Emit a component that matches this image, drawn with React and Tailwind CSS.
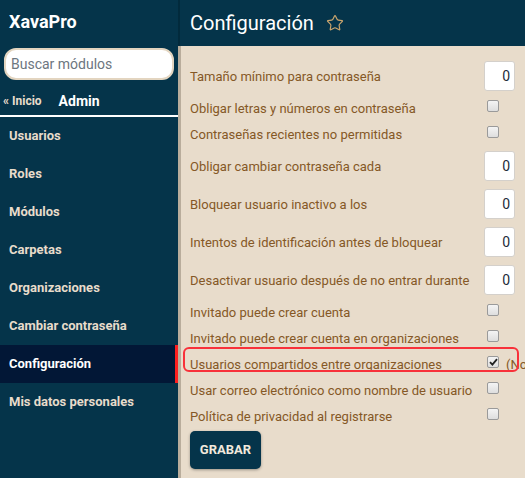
import { Star } from "lucide-react";

const MENU = [
  "Usuarios",
  "Roles",
  "Módulos",
  "Carpetas",
  "Organizaciones",
  "Cambiar contraseña",
  "Configuración",
  "Mis datos personales",
];

const FIELDS = [
  { label: "Tamaño mínimo para contraseña", type: "number" },
  { label: "Obligar letras y números en contraseña", type: "check" },
  { label: "Contraseñas recientes no permitidas", type: "check" },
  { label: "Obligar cambiar contraseña cada", type: "number" },
  { label: "Bloquear usuario inactivo a los", type: "number" },
  { label: "Intentos de identificación antes de bloquear", type: "number" },
  { label: "Desactivar usuario después de no entrar durante", type: "number" },
  { label: "Invitado puede crear cuenta", type: "check" },
  { label: "Invitado puede crear cuenta en organizaciones", type: "check" },
  { label: "Usuarios compartidos entre organizaciones", type: "check", checked: true, note: "(No disponible)", marked: true },
  { label: "Usar correo electrónico como nombre de usuario", type: "check" },
  { label: "Política de privacidad al registrarse", type: "check" },
];

function Checkbox({ checked }) {
  return (
    <div className="ml-[3px] mt-[5px] flex h-[12px] w-[12px] shrink-0 items-center justify-center rounded-[2px] border border-[#9a9a9a] bg-gradient-to-b from-[#f4f4f4] to-[#dedede]">
      {checked && (
        <svg width="9" height="8" viewBox="0 0 9 8">
          <path d="M1 4.2 L3.4 6.6 L8 1.2" fill="none" stroke="#222" strokeWidth="1.8" />
        </svg>
      )}
    </div>
  );
}

function FieldRow({ field }) {
  const isNumber = field.type === "number";
  return (
    <div className={`relative flex items-center ${isNumber ? "h-[38px]" : "h-[26px]"}`}>
      {field.marked && (
        <div className="pointer-events-none absolute left-[-7px] top-[-4px] h-[25px] w-[336px] rounded-[6px] border-2 border-[#f8313a]" />
      )}
      <div className="w-[294px] shrink-0 whitespace-nowrap pt-[2px] text-[13px] text-[#855826]">{field.label}</div>
      {isNumber ? (
        <div className="flex h-[30px] w-[31px] shrink-0 items-center justify-end rounded-[3px] border border-[#d4d0cb] bg-white pr-[4px] text-[14px] text-[#1d2b3a]">
          0
        </div>
      ) : (
        <div className="flex h-full items-start">
          <Checkbox checked={field.checked} />
          {field.note && (
            <span className="ml-[7px] mt-[4px] whitespace-nowrap text-[13px] text-[#855826]">{field.note}</span>
          )}
        </div>
      )}
    </div>
  );
}

export default function App() {
  return (
    <div className="flex h-[478px] w-[525px] overflow-hidden font-['Roboto',sans-serif]">
      <aside className="flex w-[178px] shrink-0 flex-col bg-[#05344a]">
        <div className="pl-[9px] pt-[11px] text-[18px] font-bold leading-[22px] text-white">XavaPro</div>
        <div className="mx-[4px] mt-[15px] flex h-[32px] items-center rounded-[12px] border-2 border-[#e3d5c0] bg-white pl-[5px] text-[14px] text-[#6c7680]">
          Buscar módulos
        </div>
        <div className="mt-[11px] flex h-[20px] items-center">
          <span className="pl-[3px] text-[12px] font-bold text-[#e8dccb]">« Inicio</span>
          <span className="ml-[17px] text-[14px] font-bold text-white">Admin</span>
        </div>
        <div className="mt-[4px] h-[2px] bg-white" />
        <nav className="flex flex-col">
          {MENU.map((item) => {
            const active = item === "Configuración";
            return (
              <div
                key={item}
                className={`relative flex h-[38px] items-center pl-[9px] text-[13px] font-bold ${
                  active ? "bg-[#021736] text-white" : "text-[#e8dccb]"
                }`}
              >
                {item}
                {active && <div className="absolute right-0 top-0 h-full w-[3px] bg-[#ff1f1f]" />}
              </div>
            );
          })}
        </nav>
      </aside>

      <main className="flex min-w-0 flex-1 flex-col">
        <header className="flex h-[46px] shrink-0 items-center border-l-2 border-[#022a3c] bg-[#05344a] pl-[10px]">
          <h1 className="text-[20px] leading-none text-white">Configuración</h1>
          <Star className="ml-[12px] text-[#c9a56e]" size={18} strokeWidth={1.6} />
        </header>
        <section className="flex-1 border-l-[3px] border-[#b9ad9c] bg-[#e8dccb] pl-[9px] pt-[11px]">
          {FIELDS.map((field) => (
            <FieldRow key={field.label} field={field} />
          ))}
          <button
            type="button"
            className="mt-[2px] h-[38px] w-[71px] rounded-[5px] bg-[#05344a] text-[13px] font-bold text-[#f1e9dd] shadow-[0_1px_3px_rgba(0,0,0,0.35)]"
          >
            GRABAR
          </button>
        </section>
      </main>
    </div>
  );
}
